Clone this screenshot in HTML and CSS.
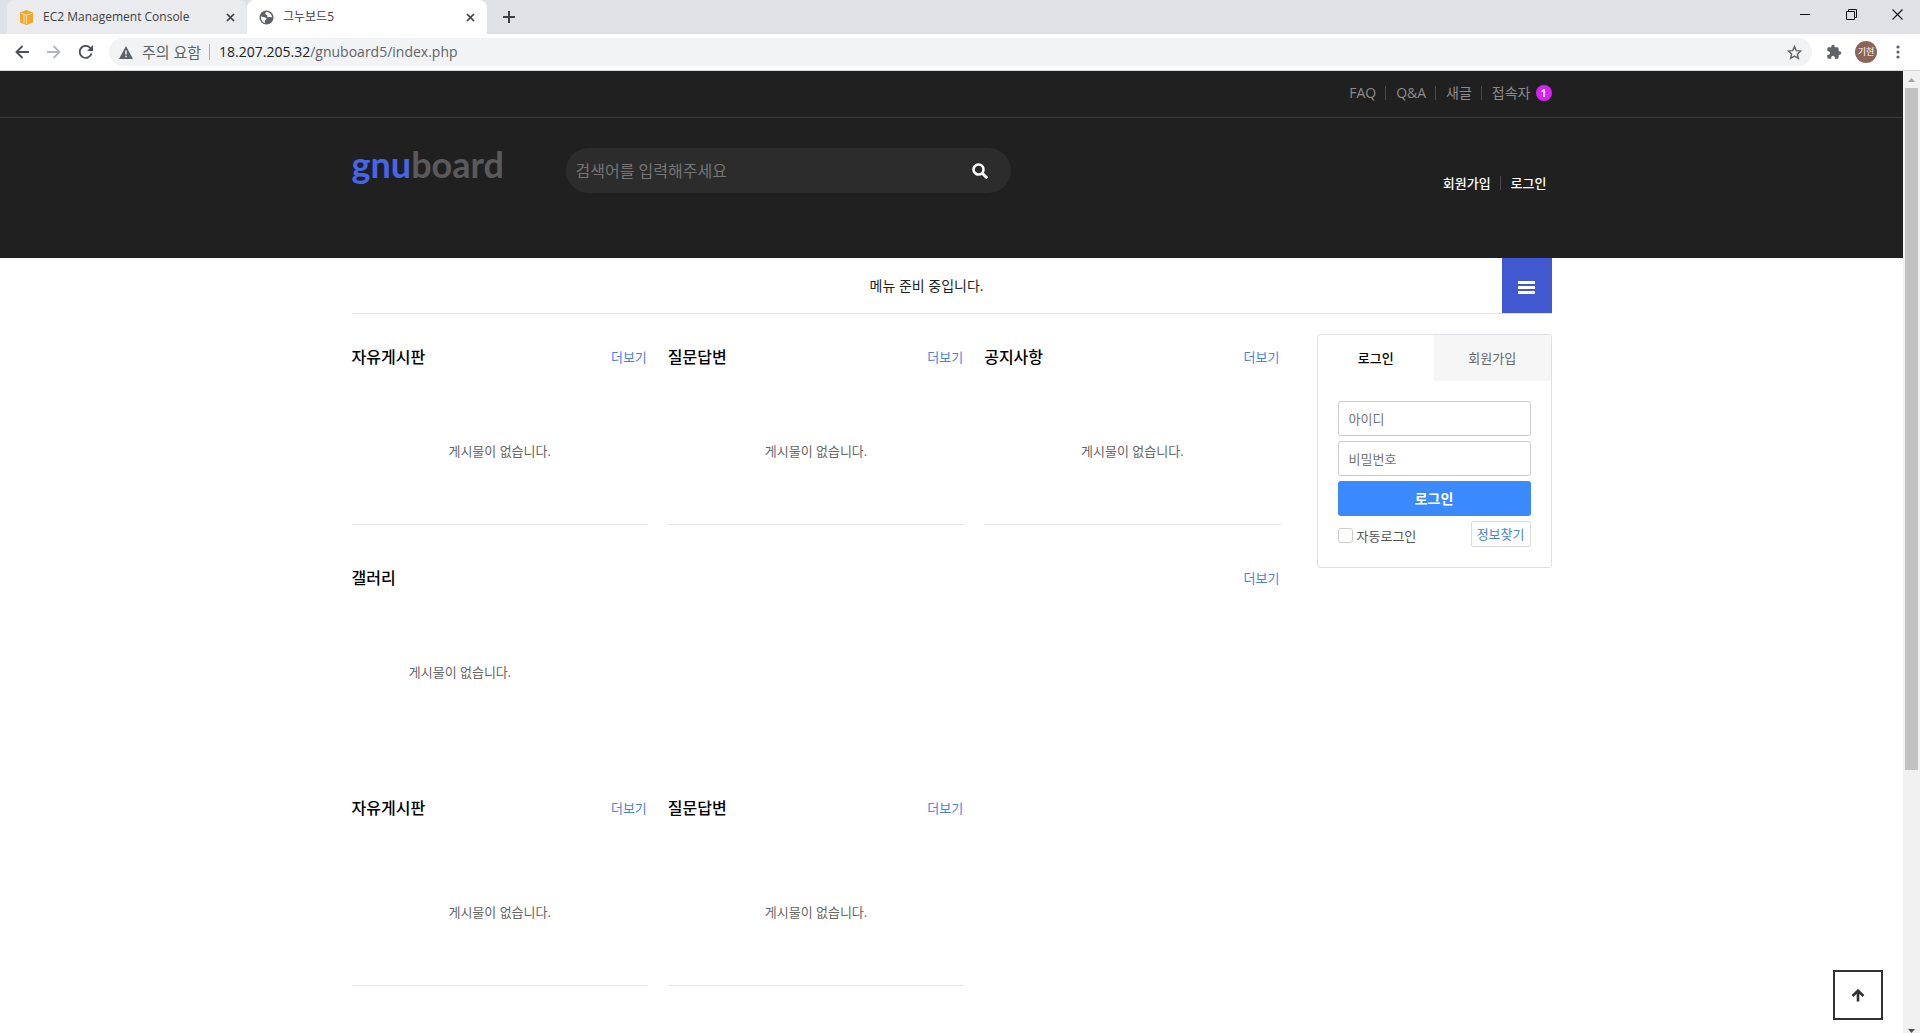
FILE: index.html
```html
<!DOCTYPE html>
<html lang="ko">
<head>
<meta charset="utf-8">
<meta name="viewport" content="width=device-width, initial-scale=1">
<title>그누보드5</title>
<link rel="stylesheet" href="styles.css">
</head>
<body>
<div class="browser">
  <div class="tabstrip">
    <div class="tab tab-first">
      <svg class="icon" width="15" height="15" viewBox="0 0 15 15"><path fill="#f0a92a" d="M1 2.5 7.5 0 14 2.5v10L7.5 15 1 12.500z"/><path fill="none" stroke="#fbe3ab" d="M2 3.200 7.500 5 13 3.200M7.500 5v9M5 4v9"/></svg>
      <span class="tab-title">EC2 Management Console</span>
      <button class="plain tab-close" aria-label="탭 닫기"><svg width="9" height="9" viewBox="0 0 9 9"><path d="m1 1 7 7M8 1 1 8" stroke="#3c4043" stroke-width="1.700"/></svg></button>
    </div>
    <div class="tab tab-current">
      <svg class="icon" width="15" height="15" viewBox="0 0 16 16"><circle cx="8" cy="8" r="7.500" fill="#5f6368"/><path fill="#fff" d="M2 7c2 0 3 1 5 1.200 1.500.3 1.300 1.600 0 2.300-1 .5-.5 2.500-1 3.500C3.500 13 1.800 10.500 2 7zM7.500 2.200C10 1.600 13.500 4 13.900 7.500c-1.300.8-2.100-.3-3.300.2-1.200.3-2.100-.2-1.700-1.300.2-.8 0-1.200-1-1.200-1.100 0-1.600-1.500-.4-3z"/></svg>
      <span class="tab-title">그누보드5</span>
      <button class="plain tab-close" aria-label="탭 닫기"><svg width="9" height="9" viewBox="0 0 9 9"><path d="m1 1 7 7M8 1 1 8" stroke="#3c4043" stroke-width="1.700"/></svg></button>
    </div>
    <button class="plain new-tab" aria-label="새 탭"><svg width="12" height="12" viewBox="0 0 12 12"><path d="M6 0v12M0 6h12" stroke="#3c4043" stroke-width="2"/></svg></button>
    <div class="window-controls">
      <button class="plain" aria-label="최소화"><svg width="11" height="11" viewBox="0 0 11 11"><path d="M0 5.500h10" stroke="#111"/></svg></button>
      <button class="plain" aria-label="이전 크기로"><svg width="11" height="11" viewBox="0 0 11 11"><path d="M.5 2.500h8v8h-8zM2.500 2.500v-2h8v8h-2" fill="none" stroke="#111"/></svg></button>
      <button class="plain" aria-label="닫기"><svg width="11" height="11" viewBox="0 0 11 11"><path d="m.5.5 10 10m0-10-10 10" stroke="#111" stroke-width="1.100"/></svg></button>
    </div>
  </div>
  <div class="toolbar">
    <button class="plain" aria-label="뒤로"><svg width="14" height="14" viewBox="0 0 14 14"><path d="M14 7H2M7.500 1 1.500 7l6 6" fill="none" stroke="#4d5156" stroke-width="1.900"/></svg></button>
    <button class="plain" aria-label="앞으로"><svg width="14" height="14" viewBox="0 0 14 14"><path d="M0 7h12M6.500 1l6 6-6 6" fill="none" stroke="#b4b7ba" stroke-width="1.900"/></svg></button>
    <button class="plain" aria-label="새로고침"><svg width="14" height="14" viewBox="0 0 14 14"><path d="M12.500 8.500A6 6 0 1 1 11.300 3L12 4" fill="none" stroke="#4d5156" stroke-width="1.900"/><path d="M14 0v6H8z" fill="#4d5156"/></svg></button>
    <div class="omnibox">
      <svg width="14" height="13" viewBox="0 0 14 13"><path fill="#5f6368" d="M7 0l7 13H0z"/><path d="M7 4.500v4M7 9.800v1.500" stroke="#fff" stroke-width="1.400"/></svg>
      <span class="caution">주의 요함</span>
      <span class="url"><b>18.207.205.32</b>/gnuboard5/index.php</span>
      <button class="plain star" aria-label="북마크"><svg width="15" height="15" viewBox="0 0 15 15"><path d="m7.500 1.500 1.800 4.100 4.500.4-3.400 3 1 4.400-3.900-2.300-3.900 2.300 1-4.400-3.400-3 4.500-.4z" fill="none" stroke="#5f6368" stroke-width="1.400"/></svg></button>
    </div>
    <div class="toolbar-end">
      <button class="plain" aria-label="확장 프로그램"><svg width="16" height="16" viewBox="0 0 24 24"><path fill="#5f6368" d="M20.500 11H19V7a2 2 0 0 0-2-2h-4V3.500a2.500 2.500 0 0 0-5 0V5H4a2 2 0 0 0-2 2v3.800h1.500a2.700 2.700 0 0 1 0 5.400H2V20c0 1.100.9 2 2 2h3.800v-1.500a2.700 2.700 0 0 1 5.400 0V22H17a2 2 0 0 0 2-2v-4h1.500a2.500 2.500 0 0 0 0-5z"/></svg></button>
      <button class="plain avatar">기현</button>
      <button class="plain more" aria-label="메뉴"><svg width="4" height="14" viewBox="0 0 4 14"><g fill="#5f6368"><circle cx="2" cy="2" r="1.600"/><circle cx="2" cy="7" r="1.600"/><circle cx="2" cy="12" r="1.600"/></g></svg></button>
    </div>
  </div>
</div>

<div class="viewport">
  <div class="page">
    <header class="header">
      <nav class="topnav">
        <ul class="wrap linklist">
          <li><a href="#">FAQ</a></li>
          <li><a href="#">Q&amp;A</a></li>
          <li><a href="#">새글</a></li>
          <li><a href="#">접속자<strong class="count">1</strong></a></li>
        </ul>
      </nav>
      <div class="wrap head">
        <a class="logo" href="#"><span>gnu</span>board</a>
        <form class="search">
          <input type="text" aria-label="검색어" placeholder="검색어를 입력해주세요">
          <button class="plain" type="button" aria-label="검색"><svg width="16" height="16" viewBox="0 0 16 16"><circle cx="6.500" cy="6.500" r="5" fill="none" stroke="#fff" stroke-width="2.600"/><path d="m10.300 10.300 4 4" stroke="#fff" stroke-width="3" stroke-linecap="round"/></svg></button>
        </form>
        <ul class="linklist member">
          <li><a href="#">회원가입</a></li>
          <li><a href="#">로그인</a></li>
        </ul>
      </div>
    </header>
    <nav class="wrap gnb">
      <p>메뉴 준비 중입니다.</p>
      <button class="plain gnb-open" aria-label="전체메뉴"><svg width="17" height="14" viewBox="0 0 17 14"><path fill="#fff" d="M0 0h17v3H0zM0 5h17v3H0zM0 10h17v3H0z"/></svg></button>
    </nav>
    <div class="wrap body">
      <main class="boards">
        <div class="row">
          <section class="board"><div class="board-head"><h2>자유게시판</h2><a href="#">더보기</a></div><p>게시물이 없습니다.</p></section>
          <section class="board"><div class="board-head"><h2>질문답변</h2><a href="#">더보기</a></div><p>게시물이 없습니다.</p></section>
          <section class="board"><div class="board-head"><h2>공지사항</h2><a href="#">더보기</a></div><p>게시물이 없습니다.</p></section>
        </div>
        <section class="gallery"><div class="board-head"><h2>갤러리</h2><a href="#">더보기</a></div><p>게시물이 없습니다.</p></section>
        <div class="row row-tall">
          <section class="board"><div class="board-head"><h2>자유게시판</h2><a href="#">더보기</a></div><p>게시물이 없습니다.</p></section>
          <section class="board"><div class="board-head"><h2>질문답변</h2><a href="#">더보기</a></div><p>게시물이 없습니다.</p></section>
        </div>
      </main>
      <aside class="login">
        <div class="login-tabs"><h2>로그인</h2><a href="#">회원가입</a></div>
        <form>
          <input class="field" type="text" aria-label="아이디" placeholder="아이디">
          <input class="field" type="password" aria-label="비밀번호" placeholder="비밀번호">
          <button class="submit" type="button">로그인</button>
          <div class="login-options">
            <label><input type="checkbox">자동로그인</label>
            <a href="#">정보찾기</a>
          </div>
        </form>
      </aside>
    </div>
    <button class="plain to-top" aria-label="상단으로"><svg width="14" height="13" viewBox="0 0 14 13"><path d="M7 12.500V2M1.500 7 7 1.700 12.500 7" fill="none" stroke="#333" stroke-width="2.600"/></svg></button>
  </div>
  <div class="scrollbar">
    <svg width="17" height="17" viewBox="0 0 17 17"><path fill="#a3a3a3" d="m5 11 3.500-4 3.500 4z"/></svg>
    <div class="track"><div class="thumb"></div></div>
    <svg width="17" height="11" viewBox="0 0 17 11"><path fill="#505050" d="m5 7 3.500 4 3.500-4z"/></svg>
  </div>
</div>
</body>
</html>
```
FILE: styles.css
```css
* { box-sizing: border-box; }
body {
  margin: 0;
  min-height: 100vh;
  display: flex;
  flex-direction: column;
  background: #fff;
  color: #666;
  font: 13px/20px "Open Sans", "Noto Sans CJK KR", sans-serif;
}
h2, p, ul { margin: 0; padding: 0; }
ul { list-style: none; }
a { color: inherit; text-decoration: none; }
svg { display: block; flex: none; }
input, button { font: inherit; }
.plain {
  display: flex;
  align-items: center;
  justify-content: center;
  flex: none;
  padding: 0;
  border: 0;
  background: none;
}

/* Browser window */
.tabstrip { display: flex; height: 34px; padding-left: 7px; background: #dee1e6; }
.tab {
  display: flex;
  align-items: center;
  gap: 9px;
  width: 240px;
  height: 34px;
  padding: 0 12px;
  border-radius: 8px 8px 0 0;
  color: #3c4043;
  line-height: 34px;
  font-size: 12px;
}
.tab-first { background: #e9ebee; }
.tab-current { background: #fff; }
.tab-title { flex: 1; white-space: nowrap; }
.new-tab { width: 44px; }
.window-controls { display: flex; align-items: center; gap: 35px; height: 28px; margin-left: auto; padding-right: 17px; }
.toolbar {
  display: flex;
  align-items: center;
  gap: 18px;
  height: 37px;
  padding-left: 15px;
  border-bottom: 1px solid #d5d8db;
}
.omnibox {
  display: flex;
  align-items: center;
  flex: 1;
  gap: 9px;
  height: 28px;
  margin-left: -2px;
  padding: 0 10px;
  border-radius: 14px;
  background: #f1f3f4;
  color: #5f6368;
  font-size: 14px;
}
.caution { padding-right: 8px; border-right: 1px solid #a9acb0; font-size: 15px; line-height: 16px; }
.url b { color: #202124; font-weight: 400; }
.star { margin-left: auto; }
.toolbar-end { display: flex; align-items: center; gap: 13px; padding-right: 20px; margin-left: -4px; }
.avatar { width: 22px; height: 22px; border-radius: 50%; background: #8d6558; color: #fff; font-size: 9px; }
.more { margin-left: 6px; }

/* Page area */
.viewport { display: flex; flex: 1; }
.page { position: relative; flex: 1; min-width: 0; }
.wrap { width: 100%; max-width: 1200px; margin: 0 auto; }
.scrollbar { display: flex; flex-direction: column; width: 17px; background: #f1f1f1; }
.track { flex: 1; padding: 0 2px; }
.thumb { height: 73%; background: #c1c1c1; }

/* Header */
.header { background: #212020; }
.topnav { border-bottom: 1px solid #393939; color: #8c8c8c; font-size: 14px; }
.linklist { display: flex; justify-content: flex-end; align-items: center; }
.topnav .linklist { height: 46px; padding-bottom: 2px; }
.linklist li { padding-left: 10px; line-height: 14px; }
.linklist li + li { margin-left: 9px; border-left: 1px solid #4a4a4a; }
.linklist a { display: flex; align-items: center; gap: 5px; }
.count {
  width: 16px;
  height: 16px;
  margin: -1px 0;
  border-radius: 50%;
  background: #da22f2;
  color: #fff;
  font-size: 10px;
  line-height: 16px;
  text-align: center;
}
.head { display: flex; align-items: flex-start; height: 140px; padding-top: 30px; }
.logo {
  width: 214px;
  color: #5b5a5b;
  font: 700 36px/32px Lato, sans-serif;
}
.logo span { color: #4765e6; }
.search {
  display: flex;
  width: 445px;
  height: 45px;
  padding: 0 23px 0 10px;
  border-radius: 23px;
  background: #2c2c2c;
}
.search input { flex: 1; min-width: 0; padding: 0; border: 0; outline: 0; background: none; color: #fff; font-size: 16px; }
.search input::placeholder { color: #757575; }
.member { margin: 25px 5px 0 auto; height: 20px; color: #fff; font-weight: 500; }

/* Menu */
.gnb { display: flex; border-bottom: 1px solid #dfe0e4; }
.gnb p { flex: 1; color: #222; font-size: 14px; line-height: 55px; text-align: center; }
.gnb-open { width: 50px; height: 55px; padding-top: 4px; background: #4158d1; }

/* Boards */
.body { display: flex; align-items: flex-start; gap: 36px; padding-top: 20px; }
.boards { flex: 1; display: flex; flex-direction: column; }
.row { display: grid; grid-template-columns: repeat(3, 1fr); gap: 20px; }
.board { border-bottom: 1px solid #e5e6e9; }
.board-head { display: flex; justify-content: space-between; padding-right: 1px; line-height: 46px; }
.board-head h2 { color: #000; font-size: 16px; font-weight: 500; line-height: 46px; }
.board-head a { color: #4a82e4; }
.board p, .gallery p { padding-bottom: 2px; line-height: 142px; text-align: center; }
.gallery { margin: 30px 0 40px; }
.gallery p { width: 217px; }
.row-tall p { padding-top: 10px; }

/* Login box */
.login { width: 235px; border: 1px solid #dde0e5; border-radius: 3px; }
.login-tabs { display: grid; grid-template-columns: 1fr 1fr; text-align: center; line-height: 46px; }
.login-tabs h2 { color: #000; font-size: 13px; font-weight: 500; line-height: 46px; }
.login-tabs a { background: #f6f6f6; }
.login form { display: flex; flex-direction: column; gap: 5px; padding: 20px; }
.field { width: 100%; height: 35px; padding: 0 10px; border: 1px solid #ccc; border-radius: 3px; }
.field::placeholder { color: #757575; }
.submit { height: 35px; padding: 0; border: 0; border-radius: 3px; background: #3a8afd; color: #fff; font-size: 14px; font-weight: 700; }
.login-options { display: flex; justify-content: space-between; height: 26px; }
.login-options label { display: flex; align-items: center; gap: 4px; padding-top: 3px; color: #555; }
.login-options input { appearance: none; width: 15px; height: 15px; margin: 0; border: 1px solid #ccc; border-radius: 3px; background: #fff; }
.login-options a { padding: 0 5px; border: 1px solid #d8dbdf; border-radius: 2px; color: #4a82e4; line-height: 24px; }

.to-top { position: fixed; right: 37px; bottom: 13px; width: 50px; height: 50px; border: 2px solid #333; background: #fff; }
```
